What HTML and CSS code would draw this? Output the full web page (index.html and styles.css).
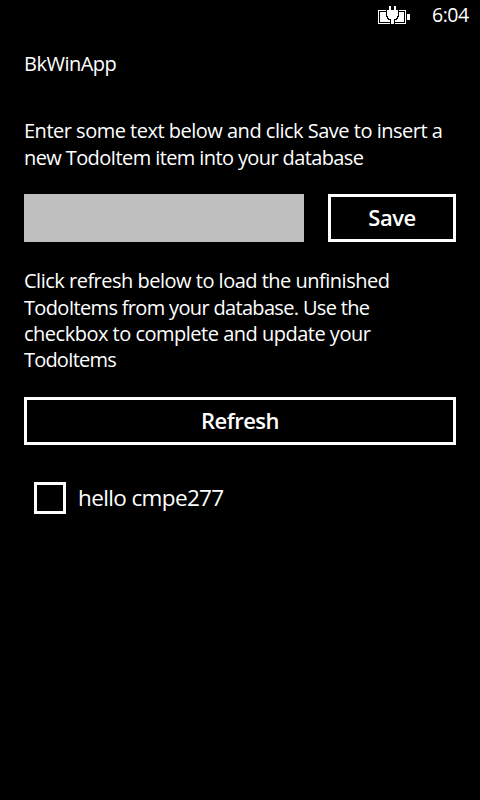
FILE: index.html
```html
<!DOCTYPE html>
<html lang="en">
<head>
<meta charset="utf-8">
<title>BkWinApp</title>
<link rel="stylesheet" href="styles.css">
</head>
<body>
<header class="status">
<svg class="battery" width="32" height="18" viewBox="0 0 32 18" shape-rendering="crispEdges">
<path fill="#fff" d="M0 4h28v14H0zM29 8h3v6h-3z"/>
<path fill="#000" d="M1 5h26v12H1z"/>
<path fill="#fff" d="M2 6h24v10H2z"/>
<path fill="#000" d="M8 3h13v8h-1v2h-1v1h-2v4h-5v-4h-2v-1H9v-2H8z"/>
<path fill="#fff" d="M11 0h2v4h3V0h2v4h2v6h-1v2h-1v1h-2v5h-3v-5h-2v-1h-1v-2H9V4h2z"/>
</svg>
<time class="clock">6:04</time>
</header>
<main class="page">
<h1 class="title">BkWinApp</h1>
<p class="copy intro">Enter some text below and click Save to insert a<br><span class="snug">new TodoItem item into your database</span></p>
<div class="entry"><input class="field" aria-label="Todo text"><button class="button">Save</button></div>
<p class="copy hint">Click refresh below to load the unfinished<br><span class="tight">TodoItems from your database. Use the</span><br>checkbox to complete and update your<br><span class="tighter">TodoItems</span></p>
<button class="button refresh">Refresh</button>
<label class="item"><input class="check" type="checkbox"><span>hello cmpe277</span></label>
</main>
</body>
</html>
```
FILE: styles.css
```css
* { box-sizing: border-box; }
body { margin: 0; height: 800px; background: #000; color: #fff; font-family: "Open Sans", "Noto Sans", sans-serif; overflow: hidden; }
.status { height: 32px; display: flex; justify-content: flex-end; align-items: flex-start; padding: 5px 10px 0 0; gap: 22px; }
.battery { display: block; margin-top: 1px; }
.clock { width: 38px; font-size: 19.5px; line-height: 19px; letter-spacing: -.5px; white-space: nowrap; }
.page { padding: 19px 24px 0; }
.title, .copy { margin: 0; font-size: 20px; font-weight: 400; line-height: 26.4px; letter-spacing: -.5px; white-space: nowrap; }
.snug { letter-spacing: -.61px; }
.tight { letter-spacing: -.67px; }
.tighter { letter-spacing: -.83px; }
.intro { margin-top: 41px; }
.entry { display: grid; grid-template-columns: 280px 128px; gap: 24px; margin-top: 23px; }
.field { height: 48px; border: 0; background: #bfbfbf; border-radius: 0; }
.button { height: 48px; border: 3px solid #fff; background: #000; color: #fff; font: 600 22px/30px "Open Sans", sans-serif; padding: 0 0 2px; letter-spacing: -.5px; }
.hint { margin-top: 26px; }
.refresh { display: block; width: 100%; margin-top: 23px; }
.item { display: flex; align-items: center; gap: 12px; height: 32px; margin: 37px 0 0 10px; font-size: 22.5px; line-height: 32px; letter-spacing: -.63px; }
.item span { padding-top: 1px; }
.check { appearance: none; width: 32px; height: 32px; margin: 0; border: 3px solid #fff; }
```
